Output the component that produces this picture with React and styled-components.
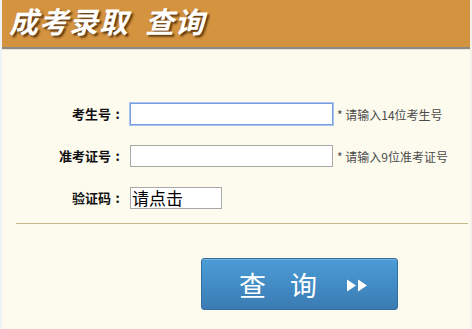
import React from "react";
import styled, { createGlobalStyle } from "styled-components";

const GlobalStyle = createGlobalStyle`
  html, body {
    margin: 0;
    padding: 0;
    background: #fdfaee;
  }
  body {
    font-family: "Noto Sans CJK SC", "Noto Sans", sans-serif;
  }
`;

const Page = styled.div`
  width: 472px;
  height: 329px;
  box-sizing: border-box;
  background: #fdfaee;
  border-left: 2px solid #eef3f6;
  border-right: 2px solid #f3f1ea;
  overflow: hidden;
`;

const Header = styled.div`
  height: 47px;
  background: #d4933f;
  border-bottom: 2px solid #8c8a86;
  display: flex;
  align-items: center;
  padding-left: 7px;
  gap: 16px;
  box-shadow: 0 1px 0 #e8e4da;
`;

const Title = styled.span`
  color: #fff;
  font-size: 29px;
  font-weight: 700;
  font-style: italic;
  line-height: 1;
  margin-top: -6px;
  text-shadow: 2px 2px 2px rgba(60, 30, 0, 0.75);
  letter-spacing: 1px;
`;

const Form = styled.div`
  display: grid;
  grid-template-columns: 122px auto 1fr;
  column-gap: 6px;
  row-gap: 20px;
  align-items: center;
  padding-top: 54px;
`;

const Label = styled.div`
  display: flex;
  justify-content: flex-end;
  font-size: 13px;
  font-weight: 700;
  color: #111;
  line-height: 22px;
`;

const Colon = styled.span`
  width: 13px;
  text-align: center;
`;

const Input = styled.div`
  box-sizing: border-box;
  width: ${(p) => p.$w}px;
  height: 22px;
  background: #fff;
  border: 1px solid ${(p) => (p.$focus ? "#7a9fe0" : "#a9a9a9")};
  box-shadow: ${(p) => (p.$focus ? "0 0 0 1px #a9c4f0" : "none")};
  font-size: 17px;
  line-height: 20px;
  color: #000;
  padding-left: 1px;
  white-space: nowrap;
`;

const Hint = styled.div`
  font-size: 12px;
  color: #4a4a4a;
  margin-left: -2px;
  white-space: nowrap;
`;

const Divider = styled.div`
  margin: 14px 2px 0 14px;
  height: 1px;
  background: #c4b88e;
`;

const ButtonRow = styled.div`
  padding: 34px 0 0 199px;
`;

const SearchButton = styled.div`
  box-sizing: border-box;
  width: 197px;
  height: 52px;
  border-radius: 3px;
  border: 1px solid #336f9e;
  background: linear-gradient(#4b9dd7, #3b7bb3);
  box-shadow: inset 0 1px 0 rgba(255, 255, 255, 0.25);
  display: flex;
  align-items: center;
  padding-left: 37px;
  gap: 24px;
  color: #fff;
  font-size: 27px;
  line-height: 1;
`;

const Arrows = styled.svg`
  margin-left: 5px;
  margin-top: 2px;
`;

function FieldLabel({ children }) {
  return (
    <Label>
      {children}
      <Colon>:</Colon>
    </Label>
  );
}

export default function App() {
  return (
    <Page>
      <GlobalStyle />
      <Header>
        <Title>成考录取</Title>
        <Title>查询</Title>
      </Header>
      <Form>
        <FieldLabel>考生号</FieldLabel>
        <Input $w={203} $focus />
        <Hint>* 请输入14位考生号</Hint>
        <FieldLabel>准考证号</FieldLabel>
        <Input $w={203} />
        <Hint>* 请输入9位准考证号</Hint>
        <FieldLabel>验证码</FieldLabel>
        <Input $w={92}>请点击</Input>
        <span />
      </Form>
      <Divider />
      <ButtonRow>
        <SearchButton>
          <span>查</span>
          <span>询</span>
          <Arrows width="22" height="13" viewBox="0 0 22 13">
            <path d="M1 0.5 L10 6.5 L1 12.5 Z M12 0.5 L21 6.5 L12 12.5 Z" fill="#fff" />
          </Arrows>
        </SearchButton>
      </ButtonRow>
    </Page>
  );
}
